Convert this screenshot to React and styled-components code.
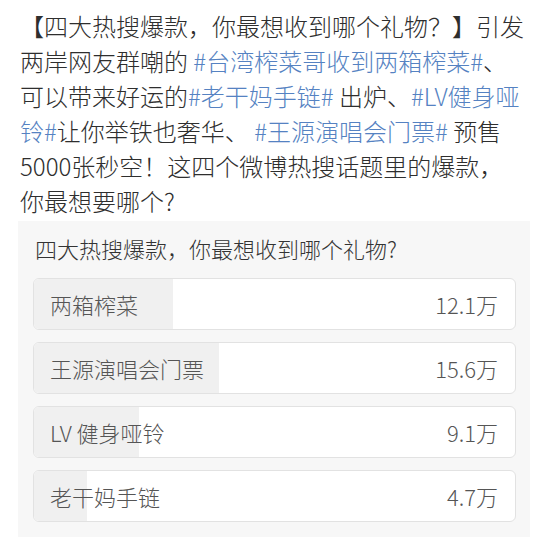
import React from "react";
import styled, { createGlobalStyle } from "styled-components";

const GlobalStyle = createGlobalStyle`
	html, body {
		margin: 0;
		padding: 0;
		background: #ffffff;
	}
	body {
		font-family: "Noto Sans CJK SC", "Noto Sans", sans-serif;
		font-weight: 300;
		color: #333333;
	}
`;

const Page = styled.div`
	width: 550px;
	height: 537px;
	overflow: hidden;
	display: flex;
	flex-direction: column;
`;

const Intro = styled.div`
	padding: 8px 0 0 20px;
	font-size: 24px;
	line-height: 35px;
	color: #2e2e2e;
`;

const Line = styled.div`
	white-space: nowrap;
`;

const Tag = styled.span`
	color: #5582c2;
`;

const Poll = styled.div`
	margin: 3px 20px 0 18px;
	flex: 1;
	background: #f7f7f7;
	padding: 12px 14px 0 15px;
	display: flex;
	flex-direction: column;
	gap: 12px;
`;

const PollTitle = styled.div`
	font-size: 22px;
	line-height: 30px;
	color: #333333;
	padding: 0 0 3px 2px;
`;

const Option = styled.div`
	position: relative;
	height: 52px;
	box-sizing: border-box;
	border: 1px solid #e2e2e2;
	border-radius: 6px;
	background: #ffffff;
	overflow: hidden;
	display: flex;
	align-items: center;
	justify-content: space-between;
	padding: 0 17px 0 16px;
	font-size: 22px;
	color: #555555;
`;

const Fill = styled.div`
	position: absolute;
	left: 0;
	top: 0;
	bottom: 0;
	background: #f0f0f0;
`;

const Label = styled.span`
	position: relative;
`;

const Count = styled.span`
	position: relative;
`;

const options = [
	{ label: "两箱榨菜", count: "12.1万", width: 139 },
	{ label: "王源演唱会门票", count: "15.6万", width: 185 },
	{ label: "LV 健身哑铃", count: "9.1万", width: 105 },
	{ label: "老干妈手链", count: "4.7万", width: 53 },
];

export default function App() {
	return (
		<Page>
			<GlobalStyle />
			<Intro>
				<Line>【四大热搜爆款，你最想收到哪个礼物？】引发</Line>
				<Line>两岸网友群嘲的 <Tag>#台湾榨菜哥收到两箱榨菜#</Tag>、</Line>
				<Line>可以带来好运的<Tag>#老干妈手链#</Tag> 出炉、<Tag>#LV健身哑</Tag></Line>
				<Line><Tag>铃#</Tag>让你举铁也奢华、 <Tag>#王源演唱会门票#</Tag> 预售</Line>
				<Line>5000张秒空！这四个微博热搜话题里的爆款，</Line>
				<Line>你最想要哪个?</Line>
			</Intro>
			<Poll>
				<PollTitle>四大热搜爆款，你最想收到哪个礼物?</PollTitle>
				{options.map((o) => (
					<Option key={o.label}>
						<Fill style={{ width: o.width }} />
						<Label>{o.label}</Label>
						<Count>{o.count}</Count>
					</Option>
				))}
			</Poll>
		</Page>
	);
}
